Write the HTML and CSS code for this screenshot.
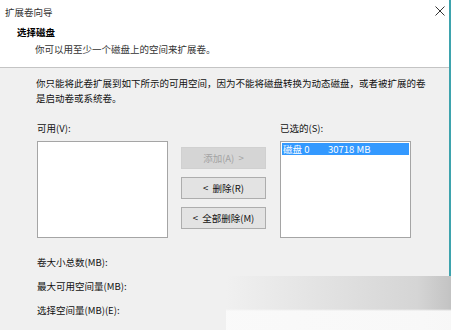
FILE: index.html
```html
<!DOCTYPE html>
<html lang="zh-CN">
<head>
    <meta charset="UTF-8">
    <title>扩展卷向导</title>
    <link rel="stylesheet" href="styles.css">
</head>
<body>
<div class="dialog">
    <div class="header">
        <div class="title-bar">
            <span class="title">扩展卷向导</span>
            <svg class="close" width="10" height="10" viewBox="0 0 10 10">
                <path d="M0.5 0.5 L9.5 9.5 M9.5 0.5 L0.5 9.5" stroke="#333" stroke-width="1" fill="none"/>
            </svg>
        </div>
        <div class="step">选择磁盘</div>
        <div class="step-desc">你可以用至少一个磁盘上的空间来扩展卷。</div>
    </div>
    <div class="content">
        <p class="note">你只能将此卷扩展到如下所示的可用空间，因为不能将磁盘转换为动态磁盘，或者被扩展的卷<br>是启动卷或系统卷。</p>
        <div class="picker">
            <div class="column">
                <div class="label">可用(V):</div>
                <div class="listbox"></div>
            </div>
            <div class="buttons">
                <div class="btn disabled">添加(A)&nbsp;&nbsp;&gt;</div>
                <div class="btn">&lt;&nbsp;&nbsp;删除(R)</div>
                <div class="btn">&lt;&nbsp;&nbsp;全部删除(M)</div>
            </div>
            <div class="column">
                <div class="label">已选的(S):</div>
                <div class="listbox">
                    <div class="item selected"><span class="disk">磁盘 0</span><span>30718 MB</span></div>
                </div>
            </div>
        </div>
        <div class="sizes">
            <div class="size-row">卷大小总数(MB):</div>
            <div class="size-row">最大可用空间量(MB):</div>
            <div class="size-row">选择空间量(MB)(E):</div>
        </div>
    </div>
    <!-- 右下角的水印模糊区域 -->
    <div class="smudge"></div>
</div>
</body>
</html>
```

FILE: styles.css
```css
* {
    margin: 0;
    padding: 0;
    box-sizing: border-box;
}
body {
    width: 451px;
    height: 330px;
    overflow: hidden;
    font-family: "Noto Sans CJK SC", "Microsoft YaHei", sans-serif;
    font-size: 9.5px;
    color: #111;
    background: #f0f0f0;
}
.dialog {
    position: relative;
    width: 451px;
    height: 330px;
    border-right: 2px solid #3ea3ad;
    background: #f0f0f0;
}
.header {
    height: 68px;
    background: #fff;
    border-bottom: 1px solid #c4c4c4;
    padding-top: 4px;
}
.title-bar {
    display: flex;
    justify-content: space-between;
    align-items: center;
    height: 16px;
    padding: 0 4px 0 5px;
    color: #333;
}
.close {
    margin-top: -3px;
}
.step {
    margin-top: 4px;
    padding-left: 17px;
    line-height: 16px;
    font-weight: bold;
    color: #000;
}
.step-desc {
    margin-top: 1px;
    padding-left: 35px;
    line-height: 16px;
    color: #333;
}
.content {
    padding: 8px 0 0 37px;
}
.note {
    line-height: 15px;
    margin-left: -1px;
}
.picker {
    display: flex;
    margin-top: 14px;
}
.column {
    display: flex;
    flex-direction: column;
}
.label {
    line-height: 16px;
    height: 16px;
    margin-bottom: 5px;
}
.listbox {
    width: 131px;
    height: 97px;
    background: #fff;
    border: 1px solid #a5a5a5;
    padding: 1px;
}
.buttons {
    display: flex;
    flex-direction: column;
    gap: 8px;
    margin: 27px 14px 0 13px;
}
.btn {
    width: 85px;
    height: 22px;
    line-height: 20px;
    text-align: center;
    background: #e3e3e3;
    border: 1px solid #adadad;
}
.btn.disabled {
    background: #d5d5d5;
    border-color: #d0d0d0;
    color: #a3a3a3;
}
.item {
    display: flex;
    height: 12px;
    line-height: 12px;
    padding-left: 1px;
}
.item.selected {
    background: #3399ff;
    color: #fff;
}
.disk {
    width: 45px;
}
.sizes {
    margin-top: 16px;
}
.size-row {
    line-height: 16px;
    margin-bottom: 8px;
}
.smudge {
    position: absolute;
    right: -2px;
    top: 276px;
    width: 225px;
    height: 54px;
    background:
        linear-gradient(to bottom, rgba(255,255,255,0) 0, rgba(255,255,255,0) 33px, rgba(250,250,250,0.95) 35px, rgba(250,250,250,0.95) 100%),
        linear-gradient(to right, rgba(210,210,210,0) 0, rgba(210,210,210,0.9) 85%, rgba(195,195,195,1) 100%);
    pointer-events: none;
}
```
